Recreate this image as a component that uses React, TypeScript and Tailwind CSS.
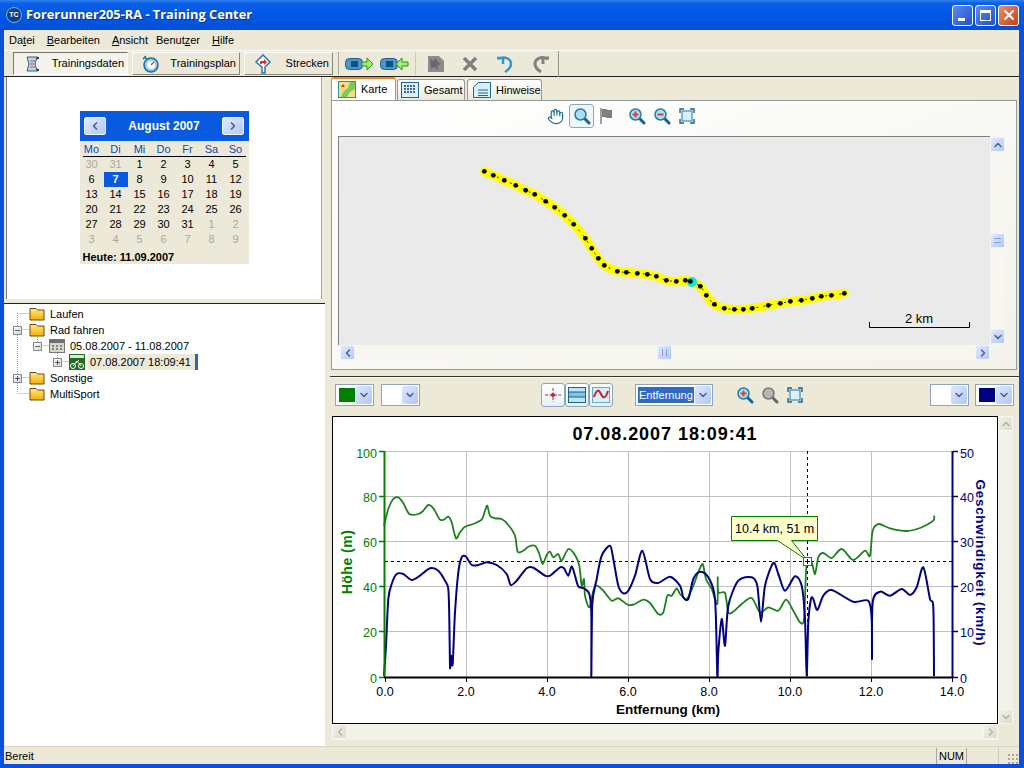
import type { ReactNode } from 'react';
import { ChevronDown, ChevronLeft, ChevronRight, ChevronUp, Hand, Minus, Plus, X } from 'lucide-react';

// points read off the screenshot, [x, y] in crop coords (3x)
const greenA = [[12,140],[25,90],[40,60],[55,55],[70,72],[88,105],[115,105],[130,95],[145,78],[160,88],[180,122],[195,120],[205,113],[215,130],[228,178],[240,160],[255,143],[280,135],[305,122],[315,95],[322,80],[330,110],[345,118],[365,120],[385,138],[405,170],[413,218],[430,215],[445,203],[465,200],[478,225],[488,255],[500,228],[510,218],[520,235],[535,225],[545,245],[565,210],[585,228],[598,260],[605,320],[612,300],[615,350],[628,385],[640,335],[650,320],[670,335],[695,365],[715,358],[745,378],[765,375],[790,362],[810,372],[835,405],[850,400],[862,350],[875,350],[890,328],[900,345]];
const greenB = [[20,360],[40,320],[55,280],[68,255],[78,300],[95,330],[112,375],[113,295],[115,340],[135,342],[145,400],[160,398],[185,375],[215,357],[240,400],[265,385],[295,395],[318,362],[340,395],[360,430],[372,420],[378,280],[382,248],[395,250],[405,285],[415,235],[430,222],[455,237],[485,210],[520,243],[555,215],[570,230],[578,155],[597,135],[630,148],[680,156],[720,147],[760,125],[762,110]];
const blueA = [[12,590],[18,500],[25,360],[35,315],[50,285],[70,285],[95,303],[120,290],[150,268],[175,275],[195,305],[205,330],[208,420],[210,565],[213,530],[218,555],[225,400],[235,280],[245,235],[258,233],[275,258],[295,258],[320,250],[350,258],[380,285],[392,318],[410,305],[440,268],[460,266],[495,290],[510,290],[540,265],[552,268],[565,290],[575,262],[585,290],[595,322],[612,328],[628,345],[634,400],[634,595],[637,375],[650,300],[665,230],[690,200],[700,240],[715,320],[730,343],[745,335],[765,290],[787,215],[810,300],[835,312],[870,293],[900,320]];
const blueB = [[10,355],[25,360],[40,300],[60,278],[85,295],[105,360],[112,590],[115,520],[125,420],[135,500],[145,380],[175,305],[215,295],[232,320],[243,428],[255,320],[280,252],[295,285],[315,335],[345,292],[365,320],[375,420],[380,590],[385,430],[393,360],[400,360],[412,393],[430,350],[455,333],[520,368],[565,365],[575,420],[576,540],[578,370],[600,338],[630,350],[665,330],[690,348],[710,325],[730,265],[750,360],[760,385],[762,592]];
const track = [[43,64],[70,76],[103,91],[137,106],[167,121],[194,133],[227,154],[254,172],[284,196],[311,223],[346,265],[365,295],[385,325],[403,346],[442,364],[469,367],[502,370],[532,373],[559,379],[589,391],[619,394],[646,391],[661,394],[691,409],[709,436],[733,463],[763,475],[793,478],[820,478],[847,475],[895,466],[931,460],[961,454],[994,451],[1027,445],[1054,439],[1084,436],[1123,430]];

const toScreen = (pts: number[][], ox: number, oy: number) => pts.map(([x, y]) => [ox + x / 3, oy + y / 3]);

// rounds the read-off points into a curve
const smooth = (pts: number[][], t = 0.14) => {
  let d = `M${pts[0][0].toFixed(1)} ${pts[0][1].toFixed(1)}`;
  for (let i = 0; i < pts.length - 1; i++) {
    const p0 = pts[i - 1] ?? pts[i];
    const p1 = pts[i];
    const p2 = pts[i + 1];
    const p3 = pts[i + 2] ?? p2;
    const c1x = p1[0] + (p2[0] - p0[0]) * t;
    const c1y = p1[1] + (p2[1] - p0[1]) * t;
    const c2x = p2[0] - (p3[0] - p1[0]) * t;
    const c2y = p2[1] - (p3[1] - p1[1]) * t;
    d += `C${c1x.toFixed(1)} ${c1y.toFixed(1)} ${c2x.toFixed(1)} ${c2y.toFixed(1)} ${p2[0].toFixed(1)} ${p2[1].toFixed(1)}`;
  }
  return d;
};

const greenLine = smooth([...toScreen(greenA, 380, 480), ...toScreen(greenB, 680, 480)]);
const blueLine = smooth([...toScreen(blueA, 380, 480), ...toScreen(blueB, 680, 480)]);
const trackPts = toScreen(track, 470, 150);
const trackLine = smooth(trackPts, 0.16);

const weeks = [
  ['30', '31', '1', '2', '3', '4', '5'],
  ['6', '7', '8', '9', '10', '11', '12'],
  ['13', '14', '15', '16', '17', '18', '19'],
  ['20', '21', '22', '23', '24', '25', '26'],
  ['27', '28', '29', '30', '31', '1', '2'],
  ['3', '4', '5', '6', '7', '8', '9'],
];

function ScrollBtn({ children, className = '' }: { children: ReactNode; className?: string }) {
  return (
    <div className={`w-[15px] h-[15px] shrink-0 rounded-[2px] border border-[#eef3fd] bg-gradient-to-br from-[#e1eafe] to-[#b3c8f5] flex items-center justify-center text-[#4d6185] ${className}`}>
      {children}
    </div>
  );
}

function DropBtn() {
  return (
    <div className="w-[16px] h-[18px] rounded-[2px] bg-gradient-to-br from-[#dde7fd] to-[#b4c6f4] flex items-center justify-center text-[#4d6185]">
      <ChevronDown size={12} strokeWidth={3} />
    </div>
  );
}

function ColorCombo({ color }: { color?: string }) {
  return (
    <div className="w-[39px] h-[22px] border border-[#8fa5bd] bg-white flex items-center justify-between pl-[3px] pr-[1px]">
      {color === 'green' && <div className="w-[16px] h-[14px] bg-[#008000]" />}
      {color === 'navy' && <div className="w-[16px] h-[14px] bg-[#000080]" />}
      {!color && <div />}
      <DropBtn />
    </div>
  );
}

function Mag({ sign, gray }: { sign?: 'plus' | 'minus'; gray?: boolean }) {
  const lens = gray ? '#b5b5b5' : '#a8e0f7';
  const edge = gray ? '#777777' : '#2a78a8';
  return (
    <svg width="18" height="18" viewBox="0 0 18 18">
      <line x1="11" y1="11" x2="16" y2="16" stroke={gray ? '#666666' : '#1f5f8f'} strokeWidth="3" strokeLinecap="round" />
      <circle cx="7.5" cy="7.5" r="5.5" fill={lens} stroke={edge} strokeWidth="1.5" />
      {sign && <line x1="4.5" y1="7.5" x2="10.5" y2="7.5" stroke={gray ? '#666666' : '#d8482a'} strokeWidth="2" />}
      {sign === 'plus' && <line x1="7.5" y1="4.5" x2="7.5" y2="10.5" stroke="#d8482a" strokeWidth="2" />}
    </svg>
  );
}

function FitIcon() {
  return (
    <svg width="16" height="16" viewBox="0 0 16 16">
      <rect x="3" y="3" width="10" height="10" fill="#d8f0fa" stroke="#2a78a8" />
      <path d="M1 5V1h4M11 1h4v4M15 11v4h-4M5 15H1v-4" fill="none" stroke="#1f5f8f" strokeWidth="1.4" />
    </svg>
  );
}

function Folder() {
  return (
    <svg width="16" height="14" viewBox="0 0 16 14" className="shrink-0">
      <defs>
        <linearGradient id="folderFill" x1="0" y1="0" x2="0" y2="1">
          <stop offset="0" stopColor="#ffe98a" />
          <stop offset="1" stopColor="#f7b000" />
        </linearGradient>
      </defs>
      <path d="M1 13V1.5h6L8.5 3H15v10z" fill="url(#folderFill)" stroke="#6b4a00" />
    </svg>
  );
}

function Expander({ open }: { open?: boolean }) {
  return (
    <div className="w-[9px] h-[9px] shrink-0 border border-[#7f8e9c] bg-gradient-to-br from-white to-[#d5d2c5] flex items-center justify-center text-black">
      {open ? <Minus size={7} strokeWidth={2} /> : <Plus size={7} strokeWidth={2} />}
    </div>
  );
}

function NavButton({ icon, label, pressed, className }: { icon: ReactNode; label: string; pressed?: boolean; className: string }) {
  return (
    <div className={`h-[23px] flex items-center border ${pressed ? 'border-t-[#7a7768] border-l-[#7a7768] border-b-white border-r-white bg-[#f5f4ec]' : 'border-t-white border-l-white border-b-[#8b8878] border-r-[#8b8878]'} ${className}`}>
      <div className="w-[36px] flex justify-center shrink-0">{icon}</div>
      <span className="ml-auto pr-[3px]">{label}</span>
    </div>
  );
}

function Tab({ label, icon, active, className }: { label: string; icon: ReactNode; active?: boolean; className: string }) {
  return (
    <div className={`flex items-center gap-[5px] rounded-t-[3px] border border-b-0 border-[#919b9c] ${active ? 'h-[23px] bg-white border-t-2 border-t-[#e68b2c]' : 'h-[21px] bg-gradient-to-b from-white to-[#ece9d8]'} ${className}`}>
      {icon}
      <span>{label}</span>
    </div>
  );
}

function ToolToggle({ children }: { children: ReactNode }) {
  return (
    <div className="w-[24px] h-[24px] rounded-[3px] border border-[#8fa5bd] bg-gradient-to-b from-white to-[#e3f2fa] flex items-center justify-center">
      {children}
    </div>
  );
}

function TrackMap() {
  return (
    <svg width="651" height="208" viewBox="339 137 651 208" className="block">
      <path d={trackLine} fill="none" stroke="#ffff00" strokeWidth="9" strokeLinecap="round" strokeLinejoin="round" />
      <path d={trackLine} fill="none" stroke="#000000" strokeWidth="0.8" strokeDasharray="2 5" />
      <circle cx="692" cy="282" r="5" fill="#19e0d8" />
      {trackPts.map(([x, y], i) => (
        <circle key={i} cx={x} cy={y} r="2.4" fill="#000000" />
      ))}
      <path d="M869.5 322v5.5h100V322" fill="none" stroke="#000000" />
      <text x="919" y="323" textAnchor="middle" fontSize="13" fontFamily="Liberation Sans, sans-serif" fill="#000000">2 km</text>
    </svg>
  );
}

function Chart() {
  const font = 'Liberation Sans, sans-serif';
  const vLines = [466, 547, 628, 709, 790, 871];
  const hLines = [452, 497, 542, 587, 632];
  const xTicks = [385, 466, 547, 628, 709, 790, 871, 952];
  const xLabels = ['0.0', '2.0', '4.0', '6.0', '8.0', '10.0', '12.0', '14.0'];
  const hY = [678, 632, 587, 542, 497, 452];
  const leftLabels = ['0', '20', '40', '60', '80', '100'];
  const rightLabels = ['0', '10', '20', '30', '40', '50'];
  return (
    <svg width="664" height="306" viewBox="333 418 664 306" className="block">
      <text x="665" y="441" textAnchor="middle" fontSize="18" fontWeight="700" letterSpacing="0.95" fontFamily={font} fill="#000000">07.08.2007 18:09:41</text>
      {vLines.map((x) => <line key={x} x1={x + 0.5} y1="452" x2={x + 0.5} y2="678" stroke="#c0c0c0" />)}
      {hLines.map((y) => <line key={y} x1="385" y1={y + 0.5} x2="952" y2={y + 0.5} stroke="#c0c0c0" />)}
      <line x1="385" y1="562.5" x2="952" y2="562.5" stroke="#000000" strokeDasharray="3 3" />
      <line x1="807.5" y1="452" x2="807.5" y2="678" stroke="#000000" strokeDasharray="3 3" />
      <path d={greenLine} fill="none" stroke="#1c801c" strokeWidth="1.8" strokeLinejoin="round" />
      <path d={blueLine} fill="none" stroke="#000080" strokeWidth="2" strokeLinejoin="round" />
      <line x1="384.5" y1="452" x2="384.5" y2="679" stroke="#008000" strokeWidth="2" />
      <line x1="952.5" y1="452" x2="952.5" y2="679" stroke="#000080" strokeWidth="2" />
      <line x1="384" y1="678.5" x2="953" y2="678.5" stroke="#000000" strokeWidth="2" />
      {xTicks.map((x, i) => (
        <g key={x}>
          <line x1={x + 0.5} y1="679" x2={x + 0.5} y2="683" stroke="#000000" />
          <text x={x} y="697" textAnchor="middle" fontSize="12.5" fontFamily={font} fill="#000000">{xLabels[i]}</text>
        </g>
      ))}
      {hY.map((y, i) => (
        <g key={y}>
          <line x1="379" y1={y + 0.5} x2="384" y2={y + 0.5} stroke="#008000" strokeWidth="1.5" />
          <text x="377" y={i === 5 ? y + 7 : y + 6} textAnchor="end" fontSize="12.5" fontFamily={font} fill="#008000">{leftLabels[i]}</text>
          <line x1="953" y1={y + 0.5} x2="958" y2={y + 0.5} stroke="#000080" strokeWidth="1.5" />
          <text x="960" y={i === 5 ? y + 7 : y + 6} fontSize="12.5" fontFamily={font} fill="#000080">{rightLabels[i]}</text>
        </g>
      ))}
      <text x="668" y="715" textAnchor="middle" fontSize="13.5" fontWeight="700" fontFamily={font} fill="#000000">Entfernung (km)</text>
      <text transform="translate(352 563) rotate(-90)" textAnchor="middle" fontSize="14" fontWeight="700" letterSpacing="0.5" fontFamily={font} fill="#008000">Höhe (m)</text>
      <text transform="translate(976 564) rotate(90)" textAnchor="middle" fontSize="13.5" fontWeight="700" letterSpacing="0.7" fontFamily={font} fill="#000080">Geschwindigkeit (km/h)</text>
      <path d="M731.5 517.5h86v24h-26l16 20-30-20h-46z" fill="#ffffcc" stroke="#008000" />
      <text x="735" y="534" fontSize="12.5" fontFamily={font} fill="#000000">10.4 km, 51 m</text>
      <rect x="803.5" y="558.5" width="8" height="8" fill="#ffffff" stroke="#1c801c" />
      <path d="M805 562.5h5M807.5 560v5" stroke="#000000" />
    </svg>
  );
}

export default function App() {
  return (
    <div className="w-[1024px] h-[768px] overflow-hidden bg-[#0a50dc] flex flex-col font-['Liberation_Sans',sans-serif] text-[11px] text-black">
      {/* title bar */}
      <div className="h-[30px] shrink-0 flex items-center pl-[6px] pr-[5px] bg-[linear-gradient(to_bottom,#2f80f0_0%,#0a5ee6_12%,#0158e4_50%,#0150d8_100%)]">
        <div className="w-[16px] h-[16px] rounded-full bg-[#0d3f86] border border-[#7fb0e8] flex items-center justify-center text-white text-[7px] font-bold">TC</div>
        <span className="ml-[4px] text-white font-bold text-[12.8px] font-['Open_Sans',sans-serif] [text-shadow:1px_1px_#0f2f80]">Forerunner205-RA - Training Center</span>
        <div className="ml-auto flex gap-[2px]">
          <div className="w-[21px] h-[21px] rounded-[3px] border border-white bg-gradient-to-br from-[#5a8cf0] to-[#1f4fd0] flex items-end pl-[5px] pb-[4px]">
            <div className="w-[7px] h-[3px] bg-white" />
          </div>
          <div className="w-[21px] h-[21px] rounded-[3px] border border-white bg-gradient-to-br from-[#5a8cf0] to-[#1f4fd0] flex items-center justify-center">
            <div className="w-[11px] h-[11px] border border-white border-t-[3px]" />
          </div>
          <div className="w-[21px] h-[21px] rounded-[3px] border border-white bg-gradient-to-br from-[#e88a6a] to-[#c83c14] flex items-center justify-center text-white">
            <X size={16} strokeWidth={3} />
          </div>
        </div>
      </div>

      <div className="flex-1 ml-[4px] mr-[5px] mb-[4px] bg-[#ece9d8] flex flex-col min-h-0">
        {/* menu */}
        <div className="h-[20px] shrink-0 flex items-center pl-[5px]">
          <span>Da<span className="underline">t</span>ei</span>
          <span className="ml-[12px]"><span className="underline">B</span>earbeiten</span>
          <span className="ml-[12px]"><span className="underline">A</span>nsicht</span>
          <span className="ml-[8px]">Benut<span className="underline">z</span>er</span>
          <span className="ml-[12px]"><span className="underline">H</span>ilfe</span>
        </div>

        {/* toolbar */}
        <div className="h-[27px] shrink-0 border-t border-t-[#faf9f4] border-b border-b-[#222222] flex items-center pl-[9px]">
          <NavButton
            pressed
            className="w-[115px]"
            label="Trainingsdaten"
            icon={
              <svg width="18" height="18" viewBox="0 0 18 18">
                <path d="M4 2h10l-2 7 2 7H4l2-7z" fill="#bcd3e6" stroke="#2f5f86" />
                <path d="M7 6h5M7 9h4M7 12h5" stroke="#c05a50" />
                <path d="M14 2l2 1-2 1M14 14l2 1-2 1" fill="#222222" stroke="#222222" />
              </svg>
            }
          />
          <NavButton
            className="w-[108px] ml-[4px]"
            label="Trainingsplan"
            icon={
              <svg width="20" height="20" viewBox="0 0 20 20">
                <circle cx="10" cy="11" r="7" fill="#8fcdec" stroke="#1f6a9a" strokeWidth="1.5" />
                <circle cx="10" cy="11" r="4" fill="#ffffff" />
                <path d="M10 11l3-3" stroke="#d8482a" strokeWidth="1.5" />
                <path d="M3 3l3 2M2 5l3-3" stroke="#1f6a9a" strokeWidth="1.5" />
              </svg>
            }
          />
          <NavButton
            className="w-[89px] ml-[4px]"
            label="Strecken"
            icon={
              <svg width="18" height="20" viewBox="0 0 18 20">
                <path d="M9 1l7 7-5 5v6H8v-6L2 8z" fill="#ffffff" stroke="#2a78a8" strokeWidth="1.5" />
                <path d="M6 10V7h4V5l3 3-3 3V9H8v1z" fill="#d8302a" />
              </svg>
            }
          />
          <div className="w-px h-[23px] bg-[#aca899] ml-[5px] mr-[6px]" />
          <div className="flex gap-[6px] items-center">
            <svg width="29" height="14" viewBox="0 0 29 14">
              <rect x="0.5" y="1.5" width="17" height="11" rx="4" fill="#4d96c8" stroke="#1f5f8f" />
              <rect x="6" y="4" width="7" height="6" fill="#0f4f86" />
              <path d="M17 5h5V1l6 6-6 6V9h-5z" fill="#9df06a" stroke="#2f8f1f" />
            </svg>
            <svg width="29" height="14" viewBox="0 0 29 14">
              <rect x="0.5" y="1.5" width="17" height="11" rx="4" fill="#4d96c8" stroke="#1f5f8f" />
              <rect x="6" y="4" width="7" height="6" fill="#0f4f86" />
              <path d="M28 5h-6V1l-6 6 6 6V9h6z" fill="#9df06a" stroke="#2f8f1f" />
            </svg>
          </div>
          <div className="w-px h-[23px] bg-[#cfcbb8] ml-[6px] mr-[11px]" />
          <div className="flex gap-[16px] items-center">
            <svg width="18" height="18" viewBox="0 0 18 18">
              <path d="M1 1h11l5 5v11H1z" fill="#8c8c8c" />
              <path d="M3 3l3 3 3-3 2 4 3 2-4 2 1 4-4-3-3 2z" fill="#6a6a6a" />
            </svg>
            <svg width="18" height="18" viewBox="0 0 18 18">
              <path d="M3 3l12 12M15 3L3 15" stroke="#808080" strokeWidth="3.5" />
            </svg>
            <svg width="20" height="18" viewBox="0 0 20 18">
              <path d="M2 3h6v6M3 4c6-3 13-1 13 5 0 4-3 6-6 8" fill="none" stroke="#2f98d0" strokeWidth="2.5" />
            </svg>
            <svg width="20" height="18" viewBox="0 0 20 18">
              <path d="M18 3h-6v6M17 4c-6-3-13-1-13 5 0 4 3 6 6 8" fill="none" stroke="#808080" strokeWidth="3" />
            </svg>
          </div>
          <div className="w-px h-[26px] bg-[#9a9788] ml-[7px]" />
        </div>

        {/* main area */}
        <div className="flex-1 flex min-h-0">
          {/* left column */}
          <div className="w-[321px] shrink-0 flex flex-col">
            <div className="h-[222px] shrink-0 ml-[2px] mr-[3px] bg-white border-l border-l-[#777777] border-r border-r-[#aca899] flex justify-center pt-[34px]">
              <div className="w-[169px] h-[153px] bg-[#ece9d8]">
                <div className="h-[30px] bg-[#0a5ae0] flex items-center justify-between px-[4px]">
                  <ScrollBtn className="w-[22px] h-[18px]"><ChevronLeft size={12} strokeWidth={3.5} /></ScrollBtn>
                  <span className="text-white font-bold text-[12px]">August 2007</span>
                  <ScrollBtn className="w-[22px] h-[18px]"><ChevronRight size={12} strokeWidth={3.5} /></ScrollBtn>
                </div>
                <div className="grid grid-cols-7 w-[168px] text-center mt-[2px] text-[#0a4ac0] h-[13px] leading-[13px]">
                  {['Mo', 'Di', 'Mi', 'Do', 'Fr', 'Sa', 'So'].map((d) => <span key={d}>{d}</span>)}
                </div>
                <div className="h-px bg-black mx-[3px]" />
                <div className="grid grid-cols-7 w-[168px] text-center leading-[15px]">
                  {weeks.flatMap((w, r) =>
                    w.map((d, c) => {
                      const muted = (r === 0 && c < 2) || (r === 4 && c > 4) || r === 5;
                      const selected = r === 1 && c === 1;
                      return (
                        <span key={`${r}-${c}`} className={selected ? 'bg-[#0a5ae0] text-white font-bold' : muted ? 'text-[#aca899]' : ''}>
                          {d}
                        </span>
                      );
                    }),
                  )}
                </div>
                <div className="font-bold pl-[3px] mt-[2px]">Heute: 11.09.2007</div>
              </div>
            </div>
            <div className="h-[5px] shrink-0 border-b border-b-[#222222]" />
            <div className="relative flex-1 ml-[1px] bg-white pt-[2px]">
              <svg width="320" height="100" className="absolute left-0 top-0 pointer-events-none">
                <path d="M12.5 9v80M12.5 9.5h12M12.5 25.5h12M12.5 73.5h12M12.5 89.5h12M32.5 31v10M32.5 41.5h11M52.5 47v10M52.5 57.5h11" fill="none" stroke="#a0a0a0" strokeDasharray="1 1" />
              </svg>
              <div className="relative h-[16px] flex items-center pl-[24px]"><Folder /><span className="ml-[5px]">Laufen</span></div>
              <div className="relative h-[16px] flex items-center pl-[8px]">
                <Expander open />
                <div className="ml-[7px]"><Folder /></div>
                <span className="ml-[5px]">Rad fahren</span>
              </div>
              <div className="relative h-[16px] flex items-center pl-[28px]">
                <Expander open />
                <svg width="16" height="14" viewBox="0 0 16 14" className="ml-[7px] shrink-0">
                  <rect x="0.5" y="0.5" width="15" height="13" fill="#d8d6cc" stroke="#777777" />
                  <rect x="1" y="1" width="14" height="3" fill="#6e6e6e" />
                  <path d="M3 7h2M7 7h2M11 7h2M3 10h2M7 10h2M11 10h2" stroke="#333333" />
                </svg>
                <span className="ml-[5px]">05.08.2007 - 11.08.2007</span>
              </div>
              <div className="relative h-[16px] flex items-center pl-[48px]">
                <Expander />
                <svg width="16" height="16" viewBox="0 0 16 16" className="ml-[7px] shrink-0">
                  <rect x="0" y="0" width="16" height="16" fill="#1f6f1f" />
                  <rect x="1" y="1" width="14" height="3" fill="#d8e8d8" />
                  <circle cx="4" cy="12" r="2.5" fill="none" stroke="#ffffff" />
                  <circle cx="12" cy="12" r="2.5" fill="none" stroke="#ffffff" />
                  <path d="M4 12l4-5 4 5M7 9l3-3" stroke="#ffffff" fill="none" />
                </svg>
                <span className="ml-[3px] h-[16px] w-[110px] pl-[2px] bg-[#ece9d8] border-r-[3px] border-r-[#3165b5] leading-[16px] whitespace-nowrap">07.08.2007 18:09:41</span>
              </div>
              <div className="relative h-[16px] flex items-center pl-[8px]">
                <Expander />
                <div className="ml-[7px]"><Folder /></div>
                <span className="ml-[5px]">Sonstige</span>
              </div>
              <div className="relative h-[16px] flex items-center pl-[24px]"><Folder /><span className="ml-[5px]">MultiSport</span></div>
            </div>
          </div>

          {/* right column */}
          <div className="ml-[5px] flex-1 flex flex-col min-w-0">
            {/* tabs */}
            <div className="h-[23px] shrink-0 flex items-end pl-[1px]">
              <Tab
                active
                label="Karte"
                className="w-[65px] pl-[6px]"
                icon={
                  <svg width="18" height="17" viewBox="0 0 18 17">
                    <rect x="0.5" y="0.5" width="17" height="16" fill="#f0e27a" stroke="#2f8f9f" />
                    <path d="M12 1l-2 6-5 4-2 5h6l3-5 5-3V1z" fill="#7fc85a" />
                    <path d="M5 3l2 3H3z" fill="#d8302a" />
                  </svg>
                }
              />
              <Tab
                label="Gesamt"
                className="w-[68px] ml-[1px] pl-[3px]"
                icon={
                  <svg width="18" height="16" viewBox="0 0 18 16">
                    <rect x="0.5" y="0.5" width="17" height="15" fill="#d8f0fa" stroke="#1f6a8a" />
                    <path d="M3 4h12M3 7h12M3 10h12" stroke="#1a2f8a" strokeWidth="1.5" strokeDasharray="2 1" />
                  </svg>
                }
              />
              <Tab
                label="Hinweise"
                className="w-[75px] ml-[2px] pl-[5px]"
                icon={
                  <svg width="18" height="16" viewBox="0 0 18 16">
                    <path d="M0.5 5l5-4.5h12v15H0.5z" fill="#d8f0fa" stroke="#1f6a8a" />
                    <path d="M5 8h10M5 11h10M5 13.5h10" stroke="#1f6a8a" />
                  </svg>
                }
              />
            </div>

            {/* map panel */}
            <div className="h-[270px] shrink-0 ml-[1px] w-[686px] border border-[#919b9c] bg-gradient-to-br from-white to-[#f3f2ea]">
              <div className="h-[35px] flex items-center pl-[215px] pb-[5px]">
                <Hand size={17} strokeWidth={1.6} className="text-[#1f6a8a] mr-[5px]" />
                <div className="w-[25px] h-[24px] rounded-[3px] border border-[#8fa5bd] bg-[#eef6fb] flex items-center justify-center"><Mag /></div>
                <svg width="14" height="18" viewBox="0 0 14 18" className="ml-[5px]">
                  <path d="M2 1v16" stroke="#808080" strokeWidth="1.5" />
                  <path d="M3 2h4l2 1h4v8H8l-2-1H3z" fill="#808080" />
                </svg>
                <div className="ml-[15px]"><Mag sign="plus" /></div>
                <div className="ml-[7px]"><Mag sign="minus" /></div>
                <div className="ml-[8px]"><FitIcon /></div>
              </div>
              <div className="ml-[6px] flex">
                <div className="w-[652px] h-[209px] bg-[#eaeaea] border-t border-l border-t-[#808080] border-l-[#808080]">
                  <TrackMap />
                </div>
                <div className="w-[15px] h-[209px] flex flex-col items-center py-[1px] bg-[#f7f6f0]">
                  <ScrollBtn><ChevronUp size={12} strokeWidth={3} /></ScrollBtn>
                  <div className="flex-1 flex flex-col pt-[81px]">
                    <ScrollBtn><span className="w-[7px] h-[5px] border-y border-[#8aa0d0]" /></ScrollBtn>
                  </div>
                  <ScrollBtn><ChevronDown size={12} strokeWidth={3} /></ScrollBtn>
                </div>
              </div>
              <div className="ml-[8px] w-[650px] h-[15px] flex bg-[#f7f6f0]">
                <ScrollBtn><ChevronLeft size={12} strokeWidth={3} /></ScrollBtn>
                <div className="flex-1 pl-[302px]">
                  <ScrollBtn><span className="w-[5px] h-[7px] border-x border-[#8aa0d0]" /></ScrollBtn>
                </div>
                <ScrollBtn><ChevronRight size={12} strokeWidth={3} /></ScrollBtn>
              </div>
            </div>

            {/* chart toolbar */}
            <div className="h-[7px] shrink-0 border-b border-b-[#333333]" />
            <div className="h-[39px] shrink-0 flex items-center pl-[5px] border-t border-t-[#fbfaf5] pb-[4px]">
              <ColorCombo color="green" />
              <div className="ml-[7px]"><ColorCombo /></div>
              <div className="ml-[121px] flex">
                <ToolToggle>
                  <svg width="18" height="16" viewBox="0 0 18 16">
                    <path d="M1 8h16" stroke="#c8202a" strokeDasharray="3 1.5" />
                    <path d="M9 1v14" stroke="#c8202a" strokeDasharray="3 1.5" />
                    <circle cx="9" cy="8" r="2" fill="#c8202a" />
                  </svg>
                </ToolToggle>
                <ToolToggle>
                  <svg width="18" height="16" viewBox="0 0 18 16">
                    <rect x="0.5" y="0.5" width="17" height="15" fill="#bfe6f7" stroke="#1f5f8f" />
                    <rect x="1" y="5" width="16" height="5" fill="#7fc4ea" />
                    <path d="M1 5h16M1 10h16" stroke="#1f5f8f" />
                  </svg>
                </ToolToggle>
                <ToolToggle>
                  <svg width="18" height="16" viewBox="0 0 18 16">
                    <rect x="0.5" y="0.5" width="17" height="15" fill="#d8f0fa" stroke="#6aa8c8" />
                    <path d="M2 10c3-9 5-7 7-3s4 6 7-3" fill="none" stroke="#c8202a" strokeWidth="2" />
                  </svg>
                </ToolToggle>
              </div>
              <div className="ml-[22px] w-[78px] h-[22px] border border-[#8fa5bd] bg-white flex items-center justify-between pl-[2px] pr-[1px]">
                <span className="bg-[#316ac5] text-white px-[1px] h-[16px] leading-[16px]">Entfernung</span>
                <DropBtn />
              </div>
              <div className="ml-[23px]"><Mag sign="plus" /></div>
              <div className="ml-[7px]"><Mag gray /></div>
              <div className="ml-[8px]"><FitIcon /></div>
              <div className="ml-auto flex gap-[6px] pr-[5px]">
                <ColorCombo />
                <ColorCombo color="navy" />
              </div>
            </div>

            {/* chart */}
            <div className="flex pl-[2px] shrink-0">
              <div className="w-[666px] h-[308px] bg-white border border-black">
                <Chart />
              </div>
              <div className="w-[15px] h-[308px] flex flex-col justify-between bg-[#f3f2ea]">
                <ScrollBtn className="from-[#f2f1e8] to-[#dedccd] text-[#b5b3a5] border-[#f7f7f0]"><ChevronUp size={12} strokeWidth={3} /></ScrollBtn>
                <ScrollBtn className="from-[#f2f1e8] to-[#dedccd] text-[#b5b3a5] border-[#f7f7f0]"><ChevronDown size={12} strokeWidth={3} /></ScrollBtn>
              </div>
            </div>
            <div className="ml-[2px] w-[666px] h-[16px] shrink-0 flex justify-between bg-[#f3f2ea]">
              <ScrollBtn className="from-[#f2f1e8] to-[#dedccd] text-[#b5b3a5] border-[#f7f7f0]"><ChevronLeft size={12} strokeWidth={3} /></ScrollBtn>
              <ScrollBtn className="from-[#f2f1e8] to-[#dedccd] text-[#b5b3a5] border-[#f7f7f0]"><ChevronRight size={12} strokeWidth={3} /></ScrollBtn>
            </div>
          </div>
        </div>

        {/* status bar */}
        <div className="h-[18px] shrink-0 flex items-center pl-[1px] pt-[1px] border-t border-t-[#d8d5c4]">
          <span>Bereit</span>
          <div className="ml-auto w-[31px] h-[16px] border-x border-x-[#aca899] text-center leading-[16px]">NUM</div>
          <div className="w-[32px] h-[16px] border-r border-r-[#cfcbb8]" />
          <div className="w-[20px] h-[16px] flex items-end justify-end">
            <div className="w-[12px] h-[11px] bg-[radial-gradient(#aca899_1px,transparent_1px)] bg-[length:4px_4px]" />
          </div>
        </div>
      </div>
    </div>
  );
}
